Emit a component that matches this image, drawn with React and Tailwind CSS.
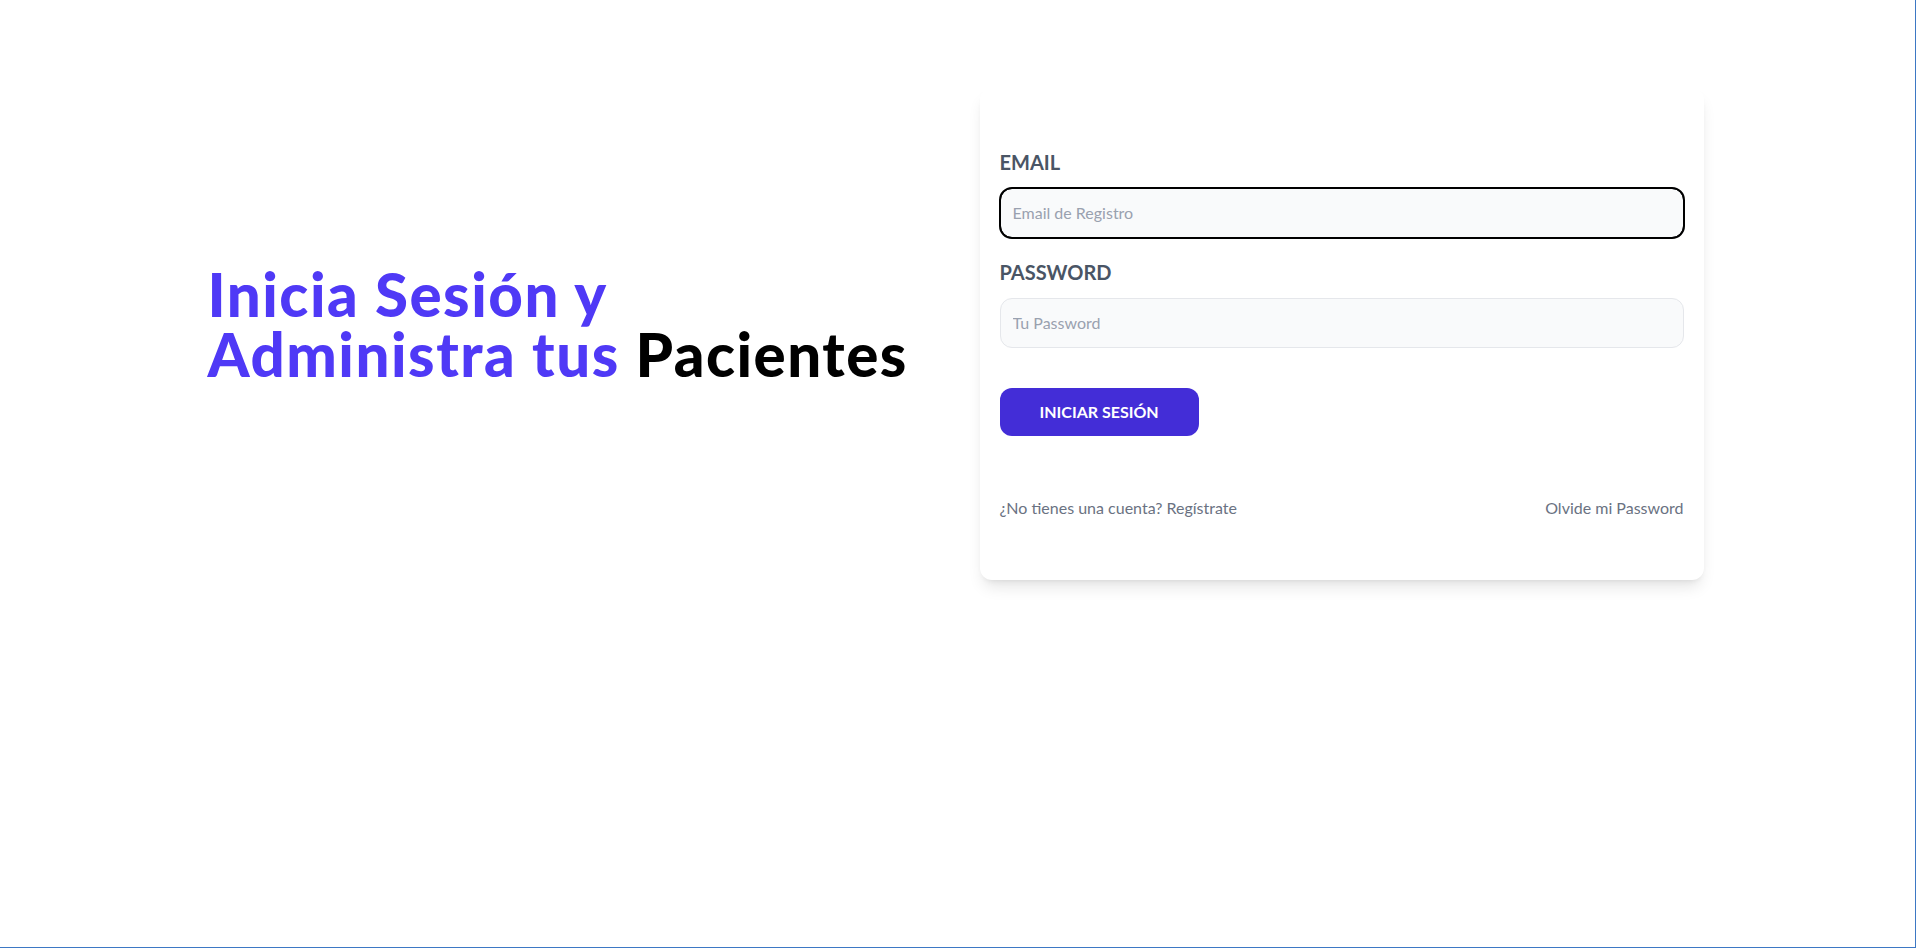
export default function App() {
  return (
    <div className="h-screen pt-12 bg-white border-r border-b border-[#3d78c4] font-['Lato','Noto_Sans',sans-serif]">
      <main className="container mx-auto p-5 grid grid-cols-2 gap-10 items-center">
        {/* Heading */}
        <div>
          <h1 className="text-indigo-600 font-black text-6xl tracking-[1.5px] -ml-0.5">
            Inicia Sesión y
            <br />
            Administra tus <span className="text-black">Pacientes</span>
          </h1>
        </div>

        {/* Form card */}
        <div className="mt-5 mx-0.5 shadow-lg px-5 py-10 rounded-xl bg-white">
          <form>
            <div className="mt-5">
              <label className="uppercase text-gray-600 block text-xl font-bold">Email</label>
              <input
                type="email"
                placeholder="Email de Registro"
                className="border border-black outline-2 outline-offset-[-1px] outline-black w-full p-3 mt-3 bg-gray-50 rounded-xl text-base placeholder:text-gray-400"
              />
            </div>
            <div className="mt-5">
              <label className="uppercase text-gray-600 block text-xl font-bold">Password</label>
              <input
                type="password"
                placeholder="Tu Password"
                className="border border-gray-200 w-full p-3 mt-3 bg-gray-50 rounded-xl text-base placeholder:text-gray-400"
              />
            </div>
            <button
              type="button"
              className="block mt-10 bg-indigo-700 text-white uppercase font-bold text-base py-3 px-10 rounded-xl"
            >
              Iniciar Sesión
            </button>
          </form>

          <nav className="mt-10 flex justify-between">
            <a href="#" className="block my-5 text-gray-500 text-base">
              ¿No tienes una cuenta? Regístrate
            </a>
            <a href="#" className="block my-5 text-gray-500 text-base">
              Olvide mi Password
            </a>
          </nav>
        </div>
      </main>
    </div>
  );
}
